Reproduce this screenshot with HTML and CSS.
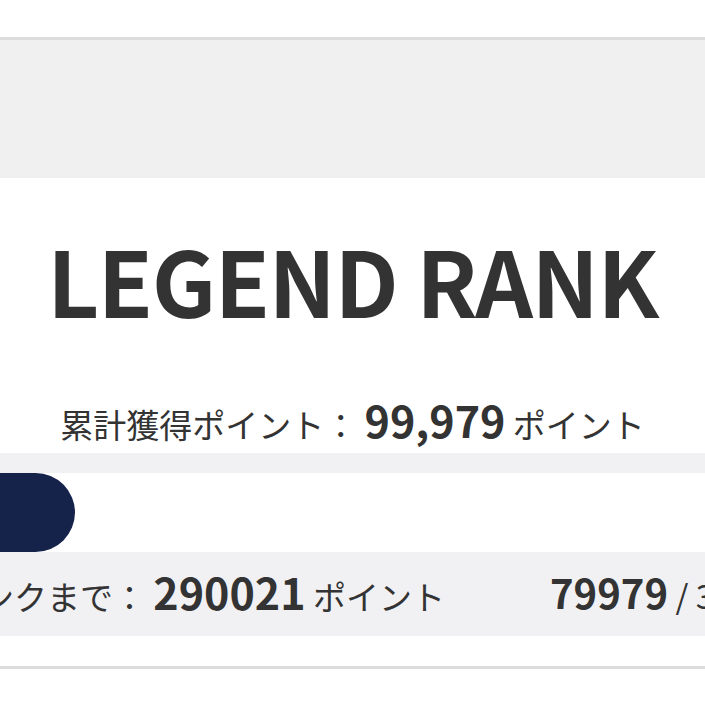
FILE: index.html
```html
<!DOCTYPE html>
<html lang="ja">
<head>
    <meta charset="UTF-8">
    <meta name="viewport" content="width=device-width, initial-scale=1.0">
    <title>ランク</title>
    <link rel="stylesheet" href="styles.css">
</head>
<body>
    <div class="top-space"></div>
    <div class="banner"></div>
    <div class="rank-card">
        <h1 class="rank-name">LEGEND RANK</h1>
        <p class="total-points">累計獲得ポイント： <span class="num">99,979</span> ポイント</p>
    </div>
    <div class="progress-wrap">
        <div class="progress-track">
            <div class="progress-fill" style="width: 75px;"></div>
        </div>
    </div>
    <div class="next-row">
        <div class="next-left">
            <span>次のランクまで： <span class="num">290021</span> ポイント</span>
        </div>
        <div class="next-right">
            <span class="num small">79979</span> / 370000
        </div>
    </div>
    <div class="bottom-space"></div>
</body>
</html>
```

FILE: styles.css
```css
body {
    font-family: "Noto Sans CJK JP", "Noto Sans", sans-serif;
    margin: 0;
    padding: 0;
    background: white;
    color: #333;
    overflow: hidden;
}
.top-space {
    height: 37px;
}
.banner {
    height: 138px;
    background: #f0f0f0;
    border-top: 3px solid #dcdcdc;
}
.rank-card {
    padding: 56px 0 7px;
    text-align: center;
}
.rank-name {
    margin: 0;
    font-size: 90px;
    line-height: 1;
    font-weight: 700;
    letter-spacing: -1.5px;
    white-space: nowrap;
}
.total-points {
    margin: 73px 0 0;
    font-size: 33px;
    line-height: 44px;
    white-space: nowrap;
}
.num {
    font-size: 43px;
    font-weight: 700;
    line-height: 44px;
}
.num.small {
    font-size: 40px;
}
.progress-wrap {
    background: #f1f1f3;
    padding-top: 20px;
}
.progress-track {
    height: 79px;
    background: white;
}
.progress-fill {
    height: 100%;
    background: #15234a;
    border-radius: 0 40px 40px 0;
}
.next-row {
    display: flex;
    align-items: center;
    height: 84px;
    background: #f1f1f3;
    font-size: 33px;
    white-space: nowrap;
    overflow: hidden;
}
.next-left {
    flex: 0 0 445px;
    min-width: 0;
    display: flex;
    justify-content: flex-end;
}
.next-right {
    flex: none;
    margin-left: 105px;
}
.bottom-space {
    height: 30px;
    border-bottom: 3px solid #dcdcdc;
}
```
